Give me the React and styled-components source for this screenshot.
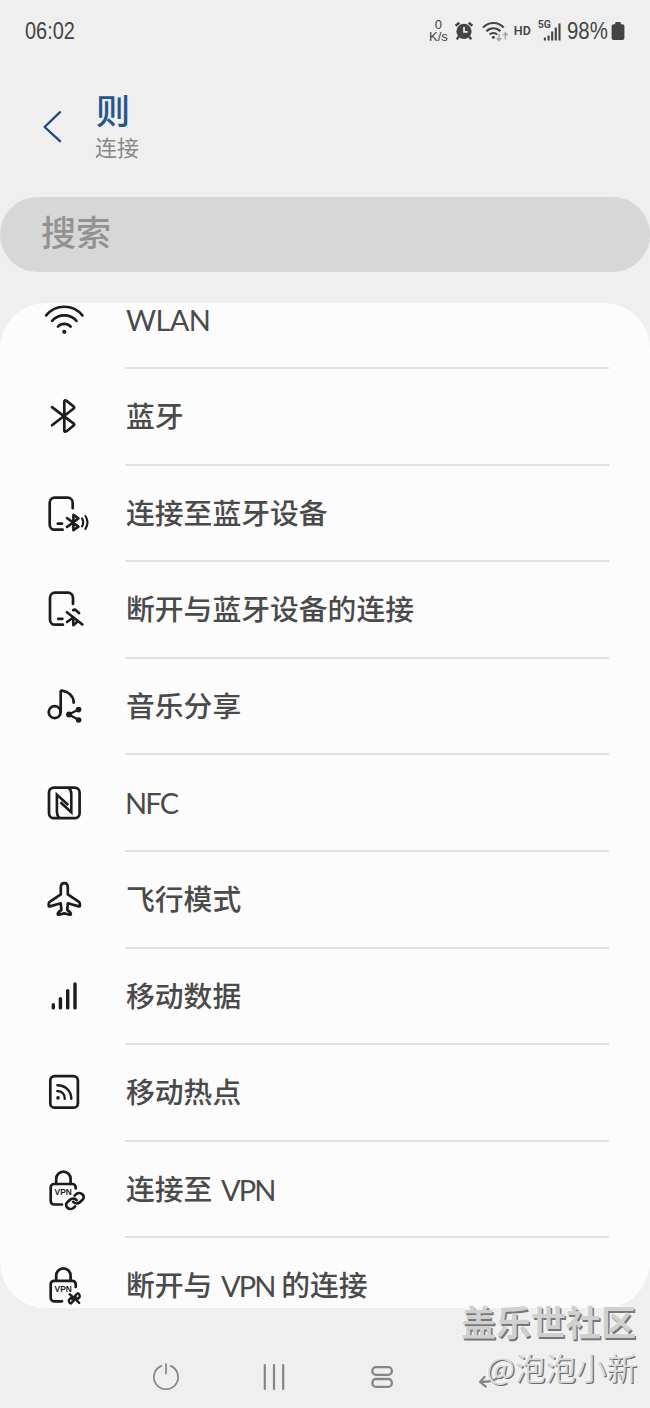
import React from 'react';
import styled, { createGlobalStyle } from 'styled-components';

const WifiIcon = () => (
  <Icon viewBox="0 0 48 48">
    <path d="M4.2 19.4A23.3 23.3 0 0 1 40.4 19.4" />
    <path d="M10.1 24.8A16.6 16.6 0 0 1 34.5 24.8" />
    <path d="M15.9 30.6A8.8 8.8 0 0 1 28.7 30.6" />
    <circle cx="22.3" cy="35.8" r="2.1" fill="currentColor" stroke="none" />
  </Icon>
);

const BluetoothIcon = () => (
  <Icon viewBox="0 0 48 48">
    <path d="M10 15.2L31.4 31.4Q32.9 32.6 31.4 33.8L24.6 39.2Q22.3 40.6 22.3 38.2V10Q22.3 7.4 24.6 8.9L31.4 14.3Q32.9 15.5 31.4 16.7L10 33.2" />
  </Icon>
);

const BluetoothOnIcon = () => (
  <Icon viewBox="0 0 48 48">
    <path d="M30.7 19.2V13.7A5 5 0 0 0 25.7 8.7H12.7A5 5 0 0 0 7.7 13.7V35.7A5 5 0 0 0 12.7 40.7H20.6" />
    <path d="M15.8 34.7H20" />
    <path strokeWidth="2.6" d="M25 29L36.4 37.6L31.4 41.2V25.8L36.4 29.4L25 38" />
    <path strokeWidth="2.1" d="M40 29.4Q42.4 33.4 40 37.4" />
    <path strokeWidth="2.1" d="M43.4 27Q47.6 33.4 43.4 39.8" />
  </Icon>
);

const BluetoothOffIcon = () => (
  <Icon viewBox="0 0 48 48">
    <path d="M31 19V12.7A5 5 0 0 0 26 7.7H13A5 5 0 0 0 8 12.7V34.7A5 5 0 0 0 13 39.7H20.9" />
    <path d="M16.2 33.8H20.4" />
    <path strokeWidth="2.6" d="M24.9 27.2L40.4 39.4" />
    <path strokeWidth="2.5" d="M25 37L31.3 32.4V40.3L35.4 36.8" />
    <path strokeWidth="2.7" d="M31.2 25.1L33 24.5L37 28" />
  </Icon>
);

const MusicShareIcon = () => (
  <Icon viewBox="0 0 48 48">
    <circle cx="12.7" cy="30.1" r="6" />
    <path d="M18.7 30.1V9.6Q18.7 8.4 20 8.6C26.5 9.6 31.5 13.6 31.7 20.6" />
    <path strokeWidth="2.3" d="M36.6 27.4L26.8 32.5L36.6 37.8" />
    <circle cx="27" cy="32.5" r="2.9" fill="currentColor" stroke="none" />
    <circle cx="36.6" cy="27.6" r="2.8" fill="currentColor" stroke="none" />
    <circle cx="36.6" cy="38" r="2.8" fill="currentColor" stroke="none" />
  </Icon>
);

const NfcIcon = () => (
  <Icon viewBox="0 0 48 48">
    <rect x="7" y="8.6" width="30.6" height="30.6" rx="5" />
    <path strokeLinejoin="miter" strokeLinecap="butt" strokeWidth="2.6" d="M17.8 39.2C15.6 37.6 14.9 35.4 14.9 32.6V15.6L26.2 26" />
    <path strokeLinejoin="miter" strokeLinecap="butt" strokeWidth="2.6" d="M26.4 8.6C28.6 10.2 29.3 12.4 29.3 15.2V33.2L18.4 23.2" />
  </Icon>
);

const AirplaneIcon = () => (
  <Icon viewBox="0 0 48 48">
    <path d="M22.3 8.2C24.5 8.2 25.8 10.2 25.8 12.8V19.4L36.6 26.6Q37.9 27.5 37.9 29V30.6Q37.9 31.8 36.7 31.4L25.9 28.3L25.2 34.9L28.4 37.6Q29 38.2 28.8 39.2Q28.6 40 27.6 39.8L22.3 38.4L17 39.8Q16 40 15.8 39.2Q15.6 38.2 16.2 37.6L19.4 34.9L18.7 28.3L7.9 31.4Q6.7 31.8 6.7 30.6V29Q6.7 27.5 8 26.6L18.8 19.4V12.8C18.8 10.2 20.1 8.2 22.3 8.2Z" />
  </Icon>
);

const MobileDataIcon = () => (
  <Icon viewBox="0 0 48 48">
    <path strokeWidth="3.4" d="M11.3 32.8V35.9M18.4 26.8V35.9M25.7 18.8V35.9M33 12V35.9" />
  </Icon>
);

const HotspotIcon = () => (
  <Icon viewBox="0 0 48 48">
    <rect x="8.3" y="8.2" width="27.6" height="31.4" rx="4.2" />
    <path strokeWidth="2.4" d="M15.4 17.2C23.4 17.2 29.3 23 29.3 30.8" />
    <path strokeWidth="2.4" d="M15.4 23C19.8 23 22.8 26.2 22.8 30.8" />
    <circle cx="16" cy="29.9" r="1.8" fill="currentColor" stroke="none" />
  </Icon>
);

const VpnOnIcon = () => (
  <Icon viewBox="0 0 48 48">
    <path d="M14.2 19V13.8A7.2 7.2 0 0 1 28.6 13.8V19" />
    <path d="M33.7 23.4V22.4A3.4 3.4 0 0 0 30.3 19H12.1A3.4 3.4 0 0 0 8.7 22.4V36.1A3.4 3.4 0 0 0 12.1 39.5H20" />
    <IconText x="21.2" y="30" textAnchor="middle">VPN</IconText>
    <g transform="translate(32.9 36) scale(0.88 0.8) translate(-12 -12)" strokeWidth="3.2">
      <path d="M10 13a5 5 0 0 0 7.54.54l3-3a5 5 0 0 0-7.07-7.07l-1.72 1.71" />
      <path d="M14 11a5 5 0 0 0-7.54-.54l-3 3a5 5 0 0 0 7.07 7.07l1.71-1.71" />
    </g>
  </Icon>
);

const VpnOffIcon = () => (
  <Icon viewBox="0 0 48 48">
    <path d="M14.2 18.8V13.6A7.2 7.2 0 0 1 28.6 13.6V18.8" />
    <path d="M33.7 25V22.2A3.4 3.4 0 0 0 30.3 18.8H12.1A3.4 3.4 0 0 0 8.7 22.2V35.9A3.4 3.4 0 0 0 12.1 39.3H20" />
    <IconText x="21.2" y="29.8" textAnchor="middle">VPN</IconText>
    <g transform="translate(32.3 36.4) scale(0.6) translate(-12 -12)" strokeWidth="4">
      <path d="M8.4 13.4L17.4 3.4A5 5 0 0 1 20.8 9.8L17.4 13.4" />
      <path d="M15.6 10.6L6.6 20.6A5 5 0 0 1 3.2 14.2L6.6 10.6" />
      <path d="M4.2 5L20.2 19.6" />
    </g>
  </Icon>
);

const settings = [
  { icon: WifiIcon, parts: [{ latin: 'WLAN', spacing: '-0.6px' }] },
  { icon: BluetoothIcon, parts: ['蓝牙'] },
  { icon: BluetoothOnIcon, parts: ['连接至蓝牙设备'] },
  { icon: BluetoothOffIcon, parts: ['断开与蓝牙设备的连接'] },
  { icon: MusicShareIcon, parts: ['音乐分享'] },
  { icon: NfcIcon, parts: [{ latin: 'NFC', spacing: '-1.8px', left: -1 }] },
  { icon: AirplaneIcon, parts: ['飞行模式'] },
  { icon: MobileDataIcon, parts: ['移动数据'] },
  { icon: HotspotIcon, parts: ['移动热点'] },
  { icon: VpnOnIcon, parts: ['连接至 ', { latin: 'VPN', spacing: '-1.8px', left: 2 }] },
  { icon: VpnOffIcon, parts: ['断开与 ', { latin: 'VPN', spacing: '-1.8px', left: 2 }, ' 的连接'] },
];

const StatusIcons = () => (
  <StatusGroup>
    <Speed>
      <span>0</span>
      <span>K/s</span>
    </Speed>
    <StatusSvg $width={20} viewBox="0 0 20 22" $left={6}>
      <circle cx="10" cy="11.4" r="7.6" fill="currentColor" />
      <path d="M1.6 5.8L5.4 2.8M18.4 5.8L14.6 2.8" stroke="currentColor" strokeWidth="2.4" />
      <path d="M4.8 16.5L2.8 19.4M15.2 16.5L17.2 19.4" stroke="currentColor" strokeWidth="2.4" />
      <path d="M10 7V11.8H13.6" fill="none" stroke="#efefef" strokeWidth="1.7" />
    </StatusSvg>
    <StatusSvg $width={27} viewBox="0 0 27 22" $left={8}>
      <g fill="none" stroke="currentColor" strokeWidth="2.1">
        <path d="M1 7.6C6.8 1.4 16 1.4 21.8 7.6" />
        <path d="M4.4 11.2C8.4 7.2 14.6 7.2 18.4 11.2" />
        <path d="M7.6 14.6C9.8 12.4 13.2 12.4 15.2 14.6" />
      </g>
      <circle cx="11.4" cy="17.2" r="1.5" fill="currentColor" />
      <path d="M17 14V20.4M14.8 18L17 20.6L19.2 18M23.4 19.6V13M21.2 15.4L23.4 12.8L25.6 15.4" fill="none" stroke="#a3a3a3" strokeWidth="1.4" />
    </StatusSvg>
    <Hd>HD</Hd>
    <Signal>
      <Generation>5G</Generation>
      <StatusSvg $width={18} viewBox="0 0 18 22" $left={0}>
        <path d="M1.9 17.4V20.4M5.6 15.4V20.4M9.2 11.6V20.4M12.8 7.4V20.4M16.5 3.4V20.4" stroke="currentColor" strokeWidth="2.1" />
      </StatusSvg>
    </Signal>
    <Battery>98%</Battery>
    <StatusSvg $width={14} viewBox="0 0 14 22" $left={3}>
      <path d="M4.2 4.2V3Q4.2 2 5.2 2H8.8Q9.8 2 9.8 3V4.2H11.4Q13.4 4.2 13.4 6.2V18Q13.4 20 11.4 20H2.6Q0.6 20 0.6 18V6.2Q0.6 4.2 2.6 4.2Z" fill="currentColor" />
    </StatusSvg>
  </StatusGroup>
);

const App = () => {
  return (
    <Screen>
      <GlobalStyle />
      <StatusBar>
        <Clock>06:02</Clock>
        <StatusIcons />
      </StatusBar>

      <Header>
        <BackButton aria-label="返回">
          <svg width="20" height="34" viewBox="0 0 20 34" fill="none" stroke="#19497d" strokeWidth="2.3" strokeLinecap="round" strokeLinejoin="round">
            <path d="M18 2.2L2.6 17L18 31.2" />
          </svg>
        </BackButton>
        <Titles>
          <Title>则</Title>
          <Subtitle>连接</Subtitle>
        </Titles>
      </Header>

      <SearchInput placeholder="搜索" />

      <Card>
        <List>
          {settings.map(({ icon: RowIcon, parts }, index) => (
            <Row key={index}>
              <RowIcon />
              <RowBody>
                <Label>
                  {parts.map((part) =>
                    typeof part === 'string' ? part : (
                      <Latin key={part.latin} $spacing={part.spacing} $left={part.left}>{part.latin}</Latin>
                    )
                  )}
                </Label>
              </RowBody>
            </Row>
          ))}
        </List>
      </Card>

      <NavBar>
        <NavIcon viewBox="0 0 30 30">
          <path d="M10.4 3.9A12.1 12.1 0 1 0 19.6 3.9M15 2V11.6" />
        </NavIcon>
        <NavIcon viewBox="0 0 30 30" $stroke={2.2}>
          <path d="M5.8 3V27M15 3V27M24.2 3V27" />
        </NavIcon>
        <NavIcon viewBox="0 0 30 30" $stroke={2.3}>
          <rect x="5.4" y="5.2" width="19.4" height="7.6" rx="3.4" />
          <rect x="5.4" y="17" width="19.4" height="7.8" rx="3.4" />
        </NavIcon>
        <NavIcon viewBox="0 0 30 30" $stroke={2.2}>
          <path d="M9.6 14.8L5 20L10.8 24.6M5.4 19.9Q24 20 25.4 11" />
        </NavIcon>
      </NavBar>

      <Watermark>
        <Community>盖乐世社区</Community>
        <Author>@泡泡小新</Author>
      </Watermark>
    </Screen>
  );
};

// Styled components
const GlobalStyle = createGlobalStyle`
  * {
    box-sizing: border-box;
  }

  body {
    margin: 0;
    background: #efefef;
  }
`;

const Screen = styled.div`
  position: relative;
  display: flex;
  flex-direction: column;
  width: 650px;
  height: 1408px;
  overflow: hidden;
  background: #efefef;
  font-family: 'Noto Sans CJK SC', sans-serif;
`;

const StatusBar = styled.div`
  display: flex;
  align-items: center;
  justify-content: space-between;
  height: 62px;
  padding: 0 25px;
  color: #444;
  font-family: 'Liberation Sans', sans-serif;
`;

/* condensed digits */
const Clock = styled.span`
  font-size: 24px;
  transform: scaleX(0.83);
  transform-origin: left;
`;

const StatusGroup = styled.div`
  display: flex;
  align-items: center;
`;

const Speed = styled.div`
  display: flex;
  flex-direction: column;
  align-items: center;
  font-size: 13px;
  line-height: 12.5px;
`;

const StatusSvg = styled.svg`
  flex: none;
  width: ${({ $width }) => $width}px;
  height: 22px;
  margin-left: ${({ $left }) => $left}px;
`;

const Hd = styled.span`
  margin: -2px 0 0 5px;
  font-family: Roboto, sans-serif;
  font-size: 12.5px;
  font-weight: 600;
`;

const Signal = styled.div`
  display: flex;
  align-items: flex-start;
  margin-left: 7px;
`;

const Generation = styled.span`
  margin-right: -8px;
  font-family: Roboto, sans-serif;
  font-size: 10.5px;
  font-weight: 600;
  line-height: 10px;
`;

const Battery = styled.span`
  width: 41px;
  margin-left: 6px;
  font-size: 24px;
  transform: scaleX(0.85);
  transform-origin: left;
`;

const Header = styled.header`
  display: flex;
  height: 135px;
  padding: 27px 0 0 42px;
`;

const BackButton = styled.button`
  display: flex;
  width: 53px;
  height: 34px;
  margin-top: 21px;
  padding: 0;
  border: none;
  background: none;
`;

const Titles = styled.div`
  display: flex;
  flex-direction: column;
`;

const Title = styled.h1`
  margin: 0 0 0 1px;
  font-size: 34px;
  font-weight: 500;
  line-height: 42px;
  color: #27568c;
`;

const Subtitle = styled.span`
  font-size: 22px;
  line-height: 30px;
  color: #888;
`;

const SearchInput = styled.input`
  flex: none;
  width: 100%;
  height: 75px;
  padding: 0 41px 8px;
  border: none;
  border-radius: 38px;
  background: #d7d7d7;
  font-family: inherit;
  font-size: 35px;
  font-weight: 500;

  &::placeholder {
    color: #929292;
    opacity: 1;
  }
`;

const Card = styled.main`
  flex: none;
  height: 1005px;
  margin-top: 31px;
  border-radius: 46px;
  background: #fcfcfc;
  overflow: hidden;
`;

/* the list is scrolled a little, so the first row is cut by the card */
const List = styled.ul`
  margin: -30.6px 0 0;
  padding: 0;
  list-style: none;
`;

const Row = styled.li`
  display: flex;
  align-items: center;
  height: 96.6px;
  padding: 0 41px 0 42px;
`;

const Icon = styled.svg`
  flex: none;
  width: 48px;
  height: 48px;
  margin-top: -2px;
  color: #1c1c1c;
  fill: none;
  stroke: currentColor;
  stroke-width: 2.7;
  stroke-linecap: round;
  stroke-linejoin: round;
`;

const IconText = styled.text`
  fill: #1c1c1c;
  stroke: none;
  font-family: 'Liberation Sans', sans-serif;
  font-size: 8.4px;
  font-weight: bold;
`;

const RowBody = styled.div`
  display: flex;
  flex: 1;
  align-items: center;
  height: 100%;
  margin-left: 35px;
  padding: 0 0 2px 1px;
  border-bottom: 2px solid #e2e2e2;

  ${Row}:last-child & {
    border-bottom-color: transparent;
  }
`;

const Label = styled.span`
  font-size: 28.8px;
  font-weight: 500;
  line-height: 30px;
  color: #4a4a4a;
  white-space: pre;
`;

const Latin = styled.span`
  position: relative;
  top: 1px;
  margin-left: ${({ $left }) => $left || 0}px;
  font-family: Lato, sans-serif;
  font-size: 29px;
  font-weight: 400;
  letter-spacing: ${({ $spacing }) => $spacing};
`;

const NavBar = styled.nav`
  display: grid;
  grid-template-columns: repeat(4, 108px);
  justify-items: center;
  padding: 54px 0 0 112px;
`;

const NavIcon = styled.svg`
  width: 30px;
  height: 30px;
  fill: none;
  stroke: #858585;
  stroke-width: ${({ $stroke }) => $stroke || 1.7};
  stroke-linecap: round;
  stroke-linejoin: round;
`;

const Watermark = styled.div`
  position: absolute;
  right: 13px;
  bottom: 18px;
  display: flex;
  flex-direction: column;
  align-items: flex-end;
  color: #d0d0d0;
  white-space: nowrap;
`;

const Community = styled.span`
  margin-right: 1px;
  font-size: 35px;
  font-weight: 700;
  line-height: 46px;
  text-shadow: 1.5px 1.5px 0 #777, -1px -1px 0 #f6f6f6;
`;

const Author = styled.span`
  font-size: 30.5px;
  line-height: 46px;
  color: #dadada;
  text-shadow: 1.3px 1.3px 0 #6c6c6c, -1px -1px 0 #fafafa;
`;

export default App;
